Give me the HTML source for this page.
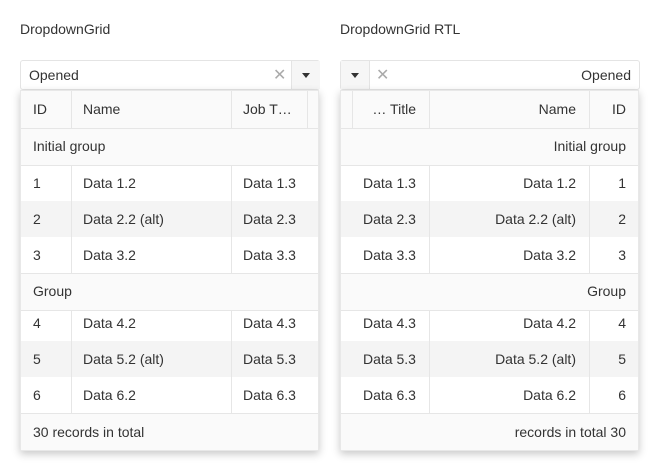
<!DOCTYPE html>
<html><head><style>
*{box-sizing:border-box;margin:0;padding:0}
body{width:660px;height:471px;background:#fff;font-family:"Liberation Sans",sans-serif;font-size:14px;color:#333;position:relative;overflow:hidden}
.a{position:absolute}
.t{position:absolute;white-space:nowrap;line-height:16px;margin-top:-1px}
.inp{border:1px solid #e4e4e4;border-radius:3px;background:#fff;height:30px;top:60px}
.pop{top:90px;width:299px;height:361px;background:#fff;box-shadow:0 3px 8px rgba(0,0,0,.22);border:1px solid #e8e8e8;overflow:hidden}
.row{position:absolute;left:0;width:100%}
.g{background:#fafafa}
.alt{background:#f4f4f4}
.bt{border-top:1px solid #e6e6e6}
.vl{position:absolute;width:1px;background:#e6e6e6}
.x{color:#aaa;font-size:16px}
</style></head><body>
<div class="t" style="left:20px;top:22px">DropdownGrid</div>
<div class="t" style="left:340px;top:22px">DropdownGrid RTL</div>

<!-- left -->
<div class="a inp" style="left:20px;width:300px">
 <div class="t" style="left:8px;top:7px">Opened</div>
 <div class="t x" style="left:252px;top:8px">✕</div>
 <div class="a" style="left:270px;top:0;width:1px;height:28px;background:#e4e4e4"></div>
 <div class="a" style="left:271px;top:0;width:28px;height:28px;background:#f6f6f6"></div>
 <div class="a" style="left:281px;top:12px;border-left:4px solid transparent;border-right:4px solid transparent;border-top:5px solid #333"></div>
</div>
<div class="a pop" style="left:20px">
 <div class="row g" style="top:0;height:37px"></div>
 <div class="row g bt" style="top:37px;height:37px"></div>
 <div class="row bt" style="top:74px;height:36px"></div>
 <div class="row alt" style="top:110px;height:36px"></div>
 <div class="row" style="top:146px;height:36px"></div>
 <div class="row g bt" style="top:182px;height:37px"></div>
 <div class="row bt" style="top:219px;height:31px"></div>
 <div class="row alt" style="top:250px;height:36px"></div>
 <div class="row" style="top:286px;height:36px"></div>
 <div class="row g bt" style="top:322px;height:40px"></div>
 <div class="vl" style="left:50px;top:0;height:37px"></div>
 <div class="vl" style="left:210px;top:0;height:37px"></div>
 <div class="vl" style="left:286px;top:0;height:37px"></div>
 <div class="vl" style="left:50px;top:74px;height:108px"></div>
 <div class="vl" style="left:210px;top:74px;height:108px"></div>
 <div class="vl" style="left:50px;top:219px;height:103px"></div>
 <div class="vl" style="left:210px;top:219px;height:103px"></div>
 <div class="t" style="left:12px;top:11px">ID</div><div class="t" style="left:62px;top:11px">Name</div><div class="t" style="left:222px;top:11px">Job T…</div>
 <div class="t" style="left:12px;top:48px">Initial group</div>
 <div class="t" style="left:12px;top:85px">1</div><div class="t" style="left:62px;top:85px">Data 1.2</div><div class="t" style="left:222px;top:85px">Data 1.3</div>
 <div class="t" style="left:12px;top:121px">2</div><div class="t" style="left:62px;top:121px">Data 2.2 (alt)</div><div class="t" style="left:222px;top:121px">Data 2.3</div>
 <div class="t" style="left:12px;top:157px">3</div><div class="t" style="left:62px;top:157px">Data 3.2</div><div class="t" style="left:222px;top:157px">Data 3.3</div>
 <div class="t" style="left:12px;top:193px">Group</div>
 <div class="t" style="left:12px;top:225px">4</div><div class="t" style="left:62px;top:225px">Data 4.2</div><div class="t" style="left:222px;top:225px">Data 4.3</div>
 <div class="t" style="left:12px;top:261px">5</div><div class="t" style="left:62px;top:261px">Data 5.2 (alt)</div><div class="t" style="left:222px;top:261px">Data 5.3</div>
 <div class="t" style="left:12px;top:297px">6</div><div class="t" style="left:62px;top:297px">Data 6.2</div><div class="t" style="left:222px;top:297px">Data 6.3</div>
 <div class="t" style="left:12px;top:334px">30 records in total</div>
</div>

<!-- right -->
<div class="a inp" style="left:340px;width:300px">
 <div class="a" style="left:0;top:0;width:28px;height:28px;background:#f6f6f6"></div>
 <div class="a" style="left:28px;top:0;width:1px;height:28px;background:#e4e4e4"></div>
 <div class="a" style="left:10px;top:12px;border-left:4px solid transparent;border-right:4px solid transparent;border-top:5px solid #333"></div>
 <div class="t x" style="left:35px;top:8px">✕</div>
 <div class="t" style="right:8px;top:7px">Opened</div>
</div>
<div class="a pop" style="left:340px">
 <div class="row g" style="top:0;height:37px"></div>
 <div class="row g bt" style="top:37px;height:37px"></div>
 <div class="row bt" style="top:74px;height:36px"></div>
 <div class="row alt" style="top:110px;height:36px"></div>
 <div class="row" style="top:146px;height:36px"></div>
 <div class="row g bt" style="top:182px;height:37px"></div>
 <div class="row bt" style="top:219px;height:31px"></div>
 <div class="row alt" style="top:250px;height:36px"></div>
 <div class="row" style="top:286px;height:36px"></div>
 <div class="row g bt" style="top:322px;height:40px"></div>
 <div class="vl" style="left:11px;top:0;height:37px"></div>
 <div class="vl" style="left:88px;top:0;height:37px"></div>
 <div class="vl" style="left:248px;top:0;height:37px"></div>
 <div class="vl" style="left:88px;top:74px;height:108px"></div>
 <div class="vl" style="left:248px;top:74px;height:108px"></div>
 <div class="vl" style="left:88px;top:219px;height:103px"></div>
 <div class="vl" style="left:248px;top:219px;height:103px"></div>
 <div class="t" style="right:222px;top:11px">… Title</div><div class="t" style="right:62px;top:11px">Name</div><div class="t" style="right:12px;top:11px">ID</div>
 <div class="t" style="right:12px;top:48px">Initial group</div>
 <div class="t" style="left:22px;top:85px">Data 1.3</div><div class="t" style="right:62px;top:85px">Data 1.2</div><div class="t" style="right:12px;top:85px">1</div>
 <div class="t" style="left:22px;top:121px">Data 2.3</div><div class="t" style="right:62px;top:121px">Data 2.2 (alt)</div><div class="t" style="right:12px;top:121px">2</div>
 <div class="t" style="left:22px;top:157px">Data 3.3</div><div class="t" style="right:62px;top:157px">Data 3.2</div><div class="t" style="right:12px;top:157px">3</div>
 <div class="t" style="right:12px;top:193px">Group</div>
 <div class="t" style="left:22px;top:225px">Data 4.3</div><div class="t" style="right:62px;top:225px">Data 4.2</div><div class="t" style="right:12px;top:225px">4</div>
 <div class="t" style="left:22px;top:261px">Data 5.3</div><div class="t" style="right:62px;top:261px">Data 5.2 (alt)</div><div class="t" style="right:12px;top:261px">5</div>
 <div class="t" style="left:22px;top:297px">Data 6.3</div><div class="t" style="right:62px;top:297px">Data 6.2</div><div class="t" style="right:12px;top:297px">6</div>
 <div class="t" style="right:12px;top:334px">records in total 30</div>
</div>
</body></html>
